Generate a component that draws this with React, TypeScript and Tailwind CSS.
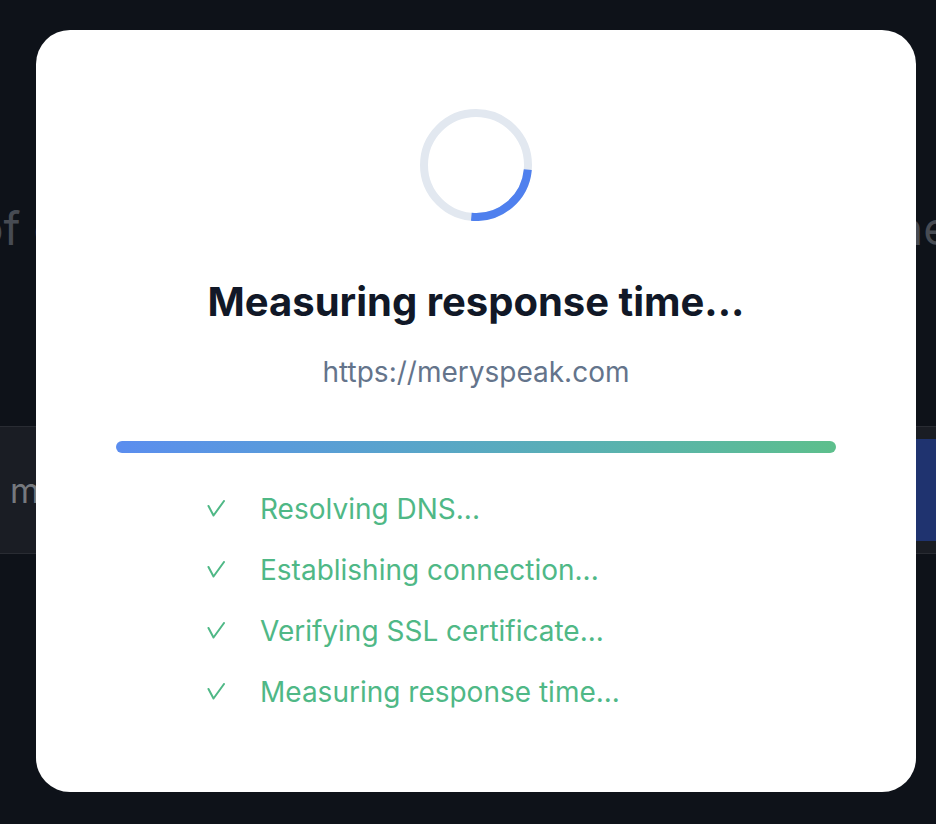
import React from "react";

const steps = [
  "Resolving DNS...",
  "Establishing connection...",
  "Verifying SSL certificate...",
  "Measuring response time...",
];

function Spinner() {
  // track + blue arc, ~95deg starting just below the right side
  const r = 52;
  const c = 2 * Math.PI * r;
  const arc = c * 0.25;
  return (
    <svg width="112" height="112" viewBox="0 0 112 112">
      <circle cx="56" cy="56" r={r} fill="none" stroke="#e2e8f0" strokeWidth="8" />
      <circle
        cx="56"
        cy="56"
        r={r}
        fill="none"
        stroke="#4f80ee"
        strokeWidth="8"
        strokeDasharray={`${arc} ${c}`}
        transform="rotate(5 56 56)"
      />
    </svg>
  );
}

function Check() {
  return (
    <svg width="18" height="18" viewBox="0 0 18 18" className="shrink-0">
      <polyline
        points="1.5,6 6.5,15.5 17,1"
        fill="none"
        stroke="#4fb886"
        strokeWidth="2"
        strokeLinecap="round"
        strokeLinejoin="round"
      />
    </svg>
  );
}

export default function App() {
  return (
    <div className="relative h-[824px] w-[936px] overflow-hidden bg-[#0e1219] font-['Inter','Noto_Sans',sans-serif]">
      {/* page behind the dialog, dimmed */}
      <div className="flex flex-col pt-[200px]">
        <div className="flex justify-between whitespace-nowrap text-[46px] leading-[56px] text-[#474b53]">
          <span className="-ml-[24px]">of c</span>
          <span className="-mr-[14px]">ne</span>
        </div>
        <div className="mt-[170px] flex h-[128px] items-center justify-between border-y border-[#292c33] bg-[#1a1d24]">
          <span className="ml-[10px] text-[34px] text-[#76797e]">m</span>
          <div className="h-[102px] w-[80px] -mr-[20px] rounded-l-lg bg-[#1f336f]" />
        </div>
      </div>

      {/* dialog */}
      <div className="absolute inset-0 pl-[36px] pt-[30px]">
        <div className="flex w-[880px] flex-col rounded-[34px] bg-white px-[80px] pt-[79px] pb-[70px]">
          <div className="flex justify-center">
            <Spinner />
          </div>
          <h2 className="mt-[57px] text-center text-[40px] font-bold leading-[48px] text-[#111827]">
            Measuring response time...
          </h2>
          <p className="mt-[28px] text-center text-[28px] leading-[36px] text-[#64748b]">
            https://meryspeak.com
          </p>
          <div className="mt-[51px] h-3 w-full rounded-full bg-gradient-to-r from-[#5b8def] to-[#5dbf8c]" />
          <ul className="mt-[25px] pl-[91px]">
            {steps.map((s) => (
              <li key={s} className="flex h-[61px] items-center gap-[35px] text-[28px] text-[#4fb886]">
                <Check />
                <span>{s}</span>
              </li>
            ))}
          </ul>
        </div>
      </div>
    </div>
  );
}
